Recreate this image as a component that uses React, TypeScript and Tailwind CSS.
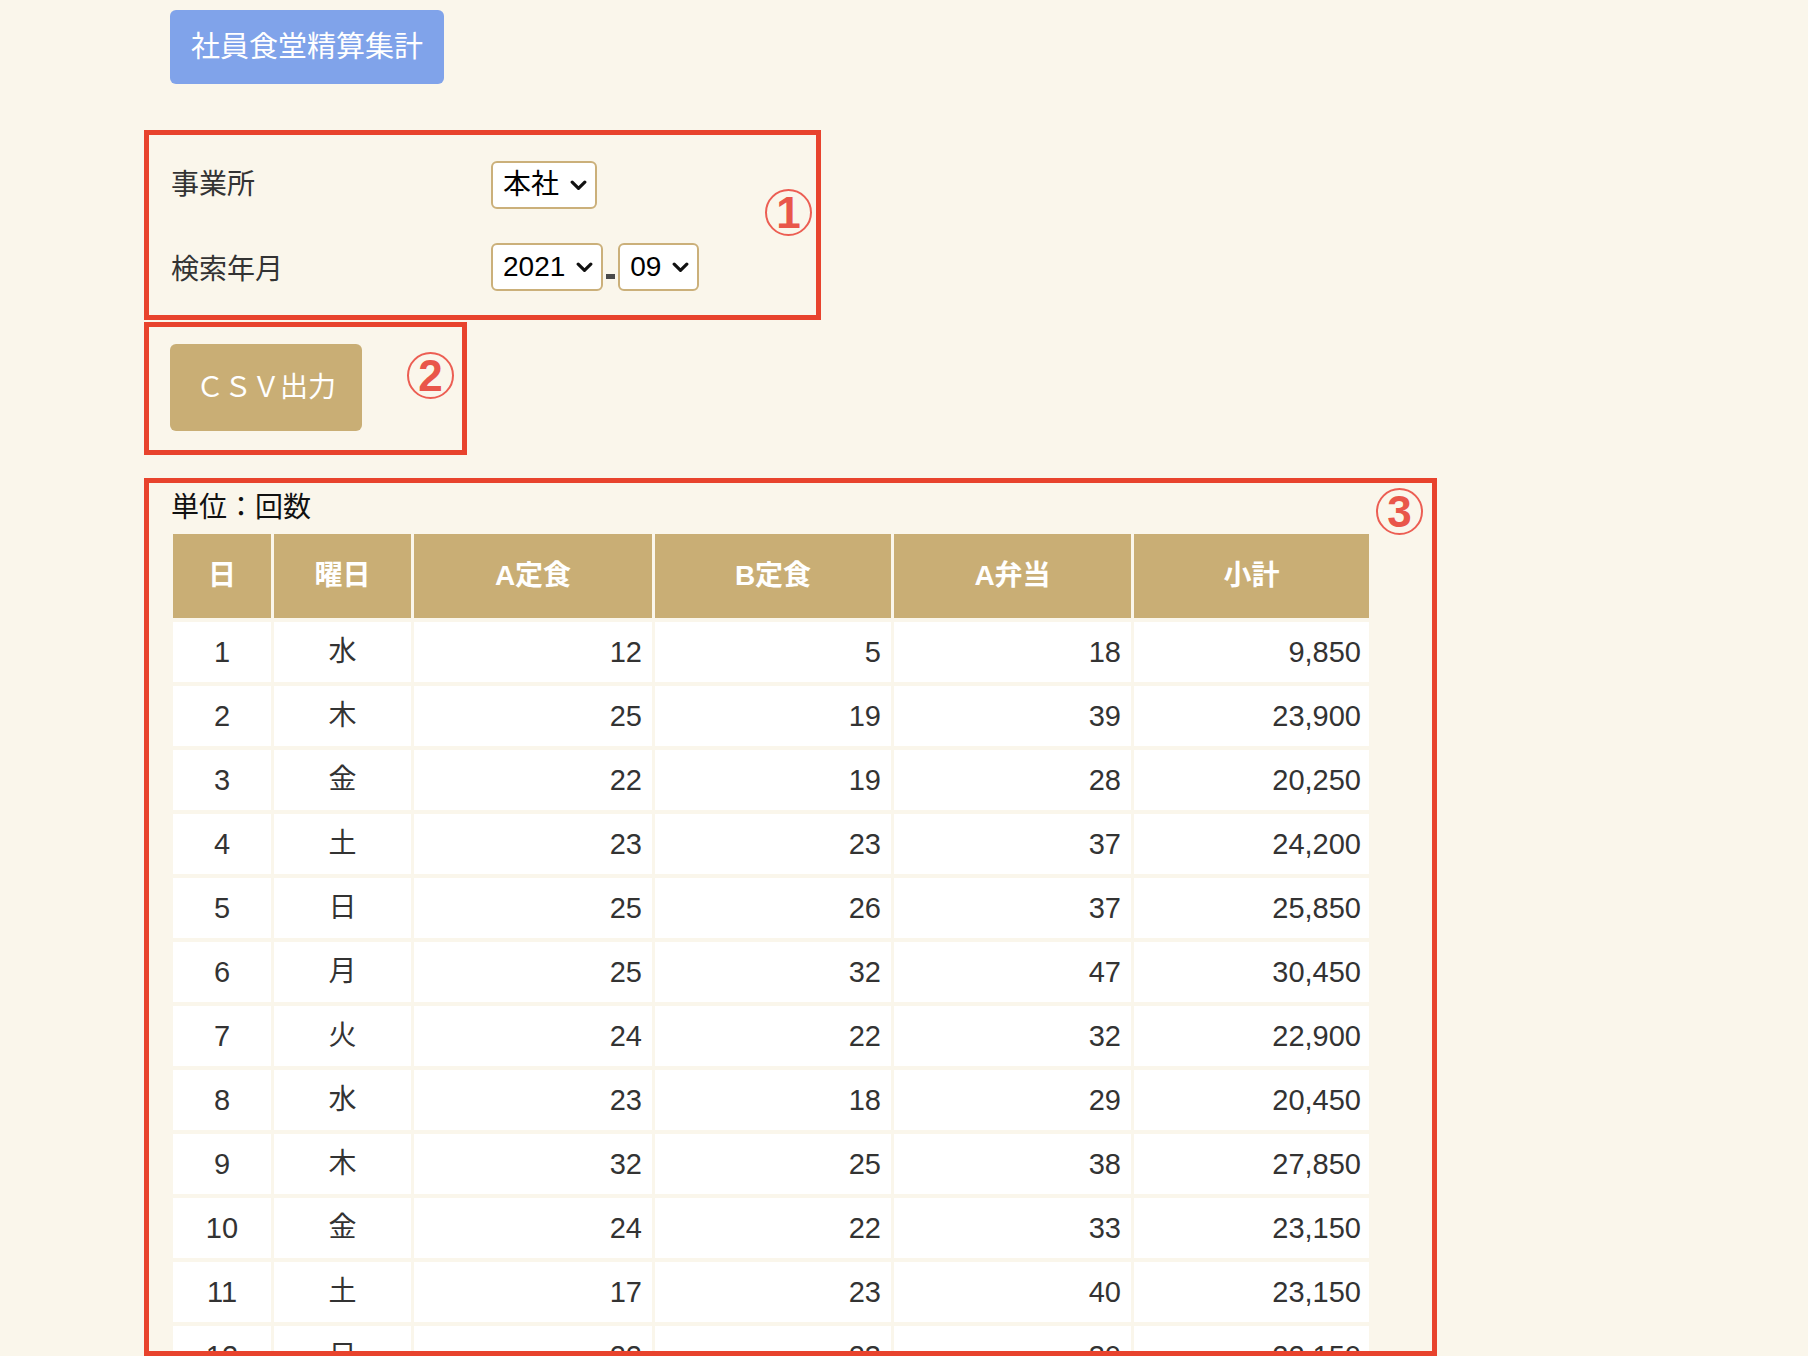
import React from "react";

type Row = [number, string, number, number, number, string];

const rows: Row[] = [
  [1, "水", 12, 5, 18, "9,850"],
  [2, "木", 25, 19, 39, "23,900"],
  [3, "金", 22, 19, 28, "20,250"],
  [4, "土", 23, 23, 37, "24,200"],
  [5, "日", 25, 26, 37, "25,850"],
  [6, "月", 25, 32, 47, "30,450"],
  [7, "火", 24, 22, 32, "22,900"],
  [8, "水", 23, 18, 29, "20,450"],
  [9, "木", 32, 25, 38, "27,850"],
  [10, "金", 24, 22, 33, "23,150"],
  [11, "土", 17, 23, 40, "23,150"],
  [12, "日", 22, 23, 30, "22,150"],
];

const headers = [
  { label: "日", w: "w-[98px]" },
  { label: "曜日", w: "w-[137px]" },
  { label: "A定食", w: "w-[238px]" },
  { label: "B定食", w: "w-[236px]" },
  { label: "A弁当", w: "w-[237px]" },
  { label: "小計", w: "w-[235px]" },
];

function Chevron() {
  return (
    <svg width="17" height="11" viewBox="0 0 17 11" className="shrink-0">
      <path
        d="M2.2 2.2 8.5 8.4 14.8 2.2"
        fill="none"
        stroke="#111"
        strokeWidth="3.2"
        strokeLinecap="round"
        strokeLinejoin="round"
      />
    </svg>
  );
}

function FakeSelect({ value }: { value: string }) {
  return (
    <div className="flex h-[48px] items-center gap-[11px] rounded-[6px] border-2 border-[#cbb07a] bg-white pl-[10px] pr-[8px] text-[28px] leading-none text-black">
      <span>{value}</span>
      <Chevron />
    </div>
  );
}

function Marker({ n, className }: { n: string; className: string }) {
  return (
    <div
      className={`absolute flex h-[47px] w-[47px] items-center justify-center rounded-full border-2 border-[#ec5e53] font-['Liberation_Sans',sans-serif] text-[44px] font-bold leading-none text-[#e9564a] ${className}`}
    >
      {n}
    </div>
  );
}

export default function App() {
  return (
    <div className="h-[1356px] w-full overflow-hidden bg-[#faf6eb] pl-[144px] pt-[10px] font-['Liberation_Sans','Noto_Sans_CJK_JP',sans-serif] text-[#333]">
      <button className="ml-[26px] flex h-[74px] w-[274px] items-center justify-center rounded-[6px] bg-[#80a3ea] text-[29px] leading-none text-white">
        社員食堂精算集計
      </button>

      {/* ① 検索条件 */}
      <div className="relative mt-[46px] h-[190px] w-[677px] border-[5px] border-[#e8432d] pl-[22px] pt-[26px]">
        <div className="grid grid-cols-[320px_auto] items-center gap-y-[34px]">
          <div className="text-[28px] leading-none">事業所</div>
          <div className="flex">
            <FakeSelect value="本社" />
          </div>
          <div className="mt-[5px] text-[28px] leading-none">検索年月</div>
          <div className="flex items-end">
            <FakeSelect value="2021" />
            <span className="mx-[3px] mb-[12px] block h-[5px] w-[9px] bg-[#4a4a4a]" />
            <FakeSelect value="09" />
          </div>
        </div>
        <Marker n="1" className="right-[4px] top-[54px]" />
      </div>

      {/* ② CSV */}
      <div className="relative mt-[2px] h-[133px] w-[323px] border-[5px] border-[#e8432d] pl-[21px] pt-[17px]">
        <button className="flex h-[87px] w-[192px] items-center justify-center rounded-[6px] bg-[#c9ae75] text-[28px] leading-none text-white">
          ＣＳＶ出力
        </button>
        <Marker n="2" className="left-[258px] top-[25px]" />
      </div>

      {/* ③ 集計表 */}
      <div className="relative mt-[23px] h-[878px] w-[1293px] overflow-hidden border-[5px] border-[#e8432d] pl-[21px] pt-[11px]">
        <div className="ml-[1px] text-[28px] leading-none text-[#111]">単位：回数</div>
        <table className="mt-[8px] w-[1202px] table-fixed border-separate border-spacing-x-[3px] border-spacing-y-[4px]">
          <thead>
            <tr>
              {headers.map((h) => (
                <th
                  key={h.label}
                  className={`${h.w} h-[84px] bg-[#c9ae75] p-0 text-center text-[28px] font-bold leading-none text-white`}
                >
                  {h.label}
                </th>
              ))}
            </tr>
          </thead>
          <tbody>
            {rows.map((r) => (
              <tr key={r[0]} className="text-[29px] leading-none">
                <td className="h-[60px] bg-white p-0 text-center">{r[0]}</td>
                <td className="h-[60px] bg-white p-0 text-center text-[28px]">{r[1]}</td>
                <td className="h-[60px] bg-white p-0 pr-[10px] text-right">{r[2]}</td>
                <td className="h-[60px] bg-white p-0 pr-[10px] text-right">{r[3]}</td>
                <td className="h-[60px] bg-white p-0 pr-[10px] text-right">{r[4]}</td>
                <td className="h-[60px] bg-white p-0 pr-[8px] text-right">{r[5]}</td>
              </tr>
            ))}
          </tbody>
        </table>
        <Marker n="3" className="right-[9px] top-[5px]" />
      </div>
    </div>
  );
}
